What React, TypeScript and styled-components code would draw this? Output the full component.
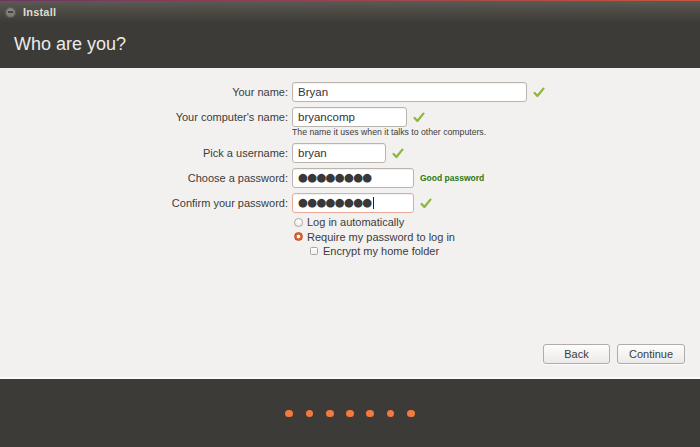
import React from "react";
import styled, { createGlobalStyle } from "styled-components";

const Global = createGlobalStyle`
  html, body { margin: 0; padding: 0; }
  body {
    width: 700px;
    height: 447px;
    overflow: hidden;
    background: #3c3b37;
    font-family: "Liberation Sans", Arial, sans-serif;
  }
`;

const Window = styled.div`
  width: 700px;
  height: 447px;
  display: flex;
  flex-direction: column;
  background: #3c3b37;
`;

const TitleBar = styled.div`
  height: 22px;
  display: flex;
  align-items: center;
  gap: 7px;
  padding-left: 5px;
  border-top: 1px solid transparent;
  border-image: linear-gradient(90deg, #6f3560, #9a4450 50%, #c8563a) 1;
  background: linear-gradient(#5b5954, #48463f 60%, #3c3b37);
`;

const CloseButton = styled.span`
  width: 11px;
  height: 11px;
  border-radius: 50%;
  background: radial-gradient(circle at 50% 35%, #8d8b86, #6e6c67);
  box-shadow: inset 0 0 0 1px #55534e;
  display: flex;
  align-items: center;
  justify-content: center;
  &::after {
    content: "";
    width: 5px;
    height: 1.5px;
    background: #45433e;
  }
`;

const WindowTitle = styled.span`
  font-family: "Liberation Sans", Arial, sans-serif;
  font-size: 11px;
  font-weight: bold;
  color: #dfdbd2;
  letter-spacing: 0.2px;
`;

const Header = styled.div`
  height: 45px;
  display: flex;
  align-items: center;
  padding: 0 0 2px 14px;
  box-sizing: border-box;
`;

const Heading = styled.h1`
  margin: 0;
  font-family: "Liberation Sans", Arial, sans-serif;
  font-weight: normal;
  font-size: 18px;
  color: #ecebe8;
`;

const Content = styled.div`
  height: 311px;
  box-sizing: border-box;
  flex-shrink: 0;
  background: #f2f1f0;
  border-bottom: 2px solid #fbfbfa;
  display: flex;
  flex-direction: column;
  padding: 14px 15px 13px 0;
`;

const Form = styled.div`
  display: grid;
  grid-template-columns: 292px auto;
  row-gap: 5px;
  justify-content: start;
`;

const Label = styled.label`
  justify-self: end;
  align-self: start;
  padding-right: 4px;
  height: 20px;
  line-height: 20px;
  font-size: 11px;
  color: #3c3c3c;
`;

const FieldCell = styled.div`
  display: flex;
  flex-direction: column;
`;

const FieldLine = styled.div`
  display: flex;
  align-items: center;
  gap: 6px;
  height: 20px;
`;

const Input = styled.div<{ $width: number; $alert?: boolean }>`
  width: ${(p) => p.$width}px;
  height: 20px;
  box-sizing: border-box;
  border: 1px solid ${(p) => (p.$alert ? "#e9a999" : "#b9b5ae")};
  border-radius: 3px;
  background: #fff;
  box-shadow: inset 0 1px 1px rgba(0, 0, 0, 0.06);
  display: flex;
  align-items: center;
  padding-left: 5px;
  font-size: 11.5px;
  color: #333;
`;

const Dots = styled.span`
  font-family: "DejaVu Sans", sans-serif;
  font-size: 11.4px;
  letter-spacing: -0.75px;
  color: #383838;
  line-height: 1;
`;

const Caret = styled.span`
  width: 1px;
  height: 12px;
  background: #222;
  margin-left: 1px;
`;

const Hint = styled.div`
  font-size: 8.7px;
  line-height: 11px;
  color: #3c3c3c;
`;

const Strength = styled.span`
  font-size: 8.5px;
  font-weight: bold;
  color: #2d7612;
`;

const Options = styled.div`
  grid-column: 2;
  margin-top: -3px;
  display: flex;
  flex-direction: column;
`;

const Option = styled.div<{ $indent?: number }>`
  height: 14.5px;
  display: flex;
  align-items: center;
  gap: 4px;
  padding-left: ${(p) => p.$indent ?? 2}px;
  font-size: 11px;
  color: #3c3c3c;
`;

const Radio = styled.span<{ $on?: boolean }>`
  width: 9px;
  height: 9px;
  box-sizing: border-box;
  border-radius: 50%;
  border: 1px solid ${(p) => (p.$on ? "#c44a1f" : "#aaa69f")};
  background: ${(p) =>
    p.$on
      ? "radial-gradient(circle, #fff 0 1.6px, #e4652f 2.1px)"
      : "linear-gradient(#fff, #f0efed)"};
`;

const Checkbox = styled.span`
  width: 8px;
  height: 8px;
  box-sizing: border-box;
  border: 1px solid #aaa69f;
  border-radius: 1.5px;
  background: linear-gradient(#fff, #f0efed);
  margin-right: 1px;
`;

const Spacer = styled.div`
  flex: 1;
`;

const ButtonRow = styled.div`
  display: flex;
  justify-content: flex-end;
  gap: 7px;
`;

const Button = styled.button<{ $width: number }>`
  width: ${(p) => p.$width}px;
  height: 20px;
  padding: 0;
  border: 1px solid #b1ada6;
  border-radius: 3px;
  background: linear-gradient(#fdfdfc, #eceae7);
  box-shadow: 0 1px 0 rgba(255, 255, 255, 0.7);
  font-family: "Liberation Sans", Arial, sans-serif;
  font-size: 11px;
  color: #3c3c3c;
`;

const Footer = styled.div`
  flex: 1;
  display: flex;
  justify-content: center;
  align-items: center;
  gap: 12.6px;
  padding-top: 1px;
`;

const Dot = styled.span`
  width: 7.7px;
  height: 7.7px;
  border-radius: 50%;
  background: #f27a3e;
`;

const Tick = () => (
  <svg width="12" height="11" viewBox="0 0 12 11">
    <path
      d="M1.6 6 L4.4 9 L10.4 1.6"
      fill="none"
      stroke="#8db83a"
      strokeWidth="2.3"
      strokeLinecap="round"
      strokeLinejoin="round"
    />
  </svg>
);

export default function App() {
  return (
    <Window>
      <Global />
      <TitleBar>
        <CloseButton />
        <WindowTitle>Install</WindowTitle>
      </TitleBar>
      <Header>
        <Heading>Who are you?</Heading>
      </Header>
      <Content>
        <Form>
          <Label>Your name:</Label>
          <FieldCell>
            <FieldLine>
              <Input $width={235}>Bryan</Input>
              <Tick />
            </FieldLine>
          </FieldCell>

          <Label>Your computer's name:</Label>
          <FieldCell>
            <FieldLine>
              <Input $width={115}>bryancomp</Input>
              <Tick />
            </FieldLine>
            <Hint>The name it uses when it talks to other computers.</Hint>
          </FieldCell>

          <Label>Pick a username:</Label>
          <FieldCell>
            <FieldLine>
              <Input $width={94}>bryan</Input>
              <Tick />
            </FieldLine>
          </FieldCell>

          <Label>Choose a password:</Label>
          <FieldCell>
            <FieldLine>
              <Input $width={122}>
                <Dots>●●●●●●●●</Dots>
              </Input>
              <Strength>Good password</Strength>
            </FieldLine>
          </FieldCell>

          <Label>Confirm your password:</Label>
          <FieldCell>
            <FieldLine>
              <Input $width={122} $alert>
                <Dots>●●●●●●●●</Dots>
                <Caret />
              </Input>
              <Tick />
            </FieldLine>
          </FieldCell>

          <Options>
            <Option>
              <Radio />
              Log in automatically
            </Option>
            <Option>
              <Radio $on />
              Require my password to log in
            </Option>
            <Option $indent={18}>
              <Checkbox />
              Encrypt my home folder
            </Option>
          </Options>
        </Form>
        <Spacer />
        <ButtonRow>
          <Button $width={67}>Back</Button>
          <Button $width={68}>Continue</Button>
        </ButtonRow>
      </Content>
      <Footer>
        {Array.from({ length: 7 }, (_, i) => (
          <Dot key={i} />
        ))}
      </Footer>
    </Window>
  );
}
